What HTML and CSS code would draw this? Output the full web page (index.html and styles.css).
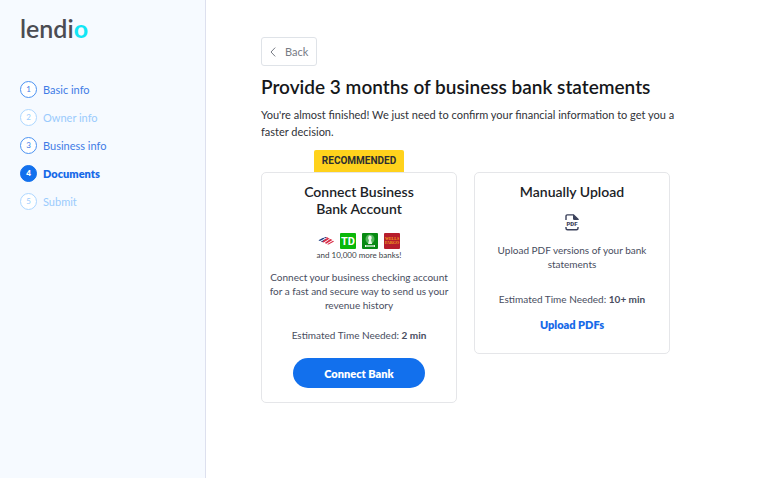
FILE: index.html
```html
<!DOCTYPE html>
<html lang="en">
<head>
<meta charset="utf-8">
<meta name="viewport" content="width=device-width, initial-scale=1">
<title>Lendio - Documents</title>
<link rel="stylesheet" href="styles.css">
</head>
<body>
<div class="app">
  <aside class="sidebar">
    <div class="logo">lendi<span class="logo-o">o</span></div>
    <nav aria-label="Application steps">
      <ol class="steps">
        <li class="step"><span class="step-number">1</span><a href="#basic">Basic info</a></li>
        <li class="step step-muted"><span class="step-number">2</span><a href="#owner">Owner info</a></li>
        <li class="step"><span class="step-number">3</span><a href="#business">Business info</a></li>
        <li class="step step-current" aria-current="step"><span class="step-number">4</span><a href="#documents">Documents</a></li>
        <li class="step step-muted"><span class="step-number">5</span><a href="#submit">Submit</a></li>
      </ol>
    </nav>
  </aside>
  <main class="main">
    <button class="back" type="button">
      <svg width="6" height="10" viewBox="0 0 6 10" fill="none" stroke="currentColor" aria-hidden="true"><path d="M5.200.6 1 5l4.200 4.400"/></svg>
      Back
    </button>
    <h1>Provide 3 months of business bank statements</h1>
    <p class="intro">You're almost finished! We just need to confirm your financial information to get you a faster decision.</p>
    <div class="options">
      <section class="option">
        <span class="badge">RECOMMENDED</span>
        <div class="card">
          <h2>Connect Business<br>Bank Account</h2>
          <div class="banks">
            <svg width="16" height="16" viewBox="0 0 17 16" aria-hidden="true">
              <path fill="#1c3c83" d="M.5 7.300 5.500 4.600l1.600.8-5 2.500zM3 8.700 8 6l1.500.8-5 2.500zM6.300 4.400 8 3.700l1.500.7-1.700.8z"/>
              <path fill="#d92b45" d="M8.300 5.600c1.500-1 2.800-1 4.200-.2L6 9.600l-1.500-.7zM13 5.800c1 .3 1.800.8 2.300 1.200L8.800 11l-1.700-.8zM9.600 11.500l6.400-3.800 1 .7-5.700 3.400zM8 4c1-.5 2-.5 3 0l-1.500.6z"/>
            </svg>
            <svg width="16" height="16" viewBox="0 0 16 16" aria-hidden="true">
              <rect width="16" height="16" rx="1" fill="#0ab80a"/>
              <text class="td-text" x="8" y="12" text-anchor="middle">TD</text>
            </svg>
            <svg width="16" height="16" viewBox="0 0 16 16" aria-hidden="true">
              <rect width="16" height="16" rx="1" fill="#078a12"/>
              <circle cx="8" cy="6" r="4.500" fill="#55b85c"/>
              <path fill="#eaf8ea" d="M7 2.500 9.200 3l.6 2-.8 2 1.200 4H6l1-3.600L6 5zM3 12h10v2H3z"/>
              <path stroke="#078a12" stroke-width=".7" d="M4 13h8"/>
            </svg>
            <svg width="16" height="16" viewBox="0 0 16 16" aria-hidden="true">
              <rect width="16" height="16" rx="1" fill="#b71c2c"/>
              <text class="wf-text" x="8" y="7" text-anchor="middle">WELLS</text>
              <text class="wf-text" x="8" y="11" text-anchor="middle">FARGO</text>
            </svg>
          </div>
          <p class="caption">and 10,000 more banks!</p>
          <p class="description">Connect your business checking account for a fast and secure way to send us your revenue history</p>
          <p class="estimate">Estimated Time Needed: <strong>2 min</strong></p>
          <button class="connect" type="button">Connect Bank</button>
        </div>
      </section>
      <section class="option">
        <div class="card card-upload">
          <h2>Manually Upload</h2>
          <svg class="pdf" width="14" height="17" viewBox="0 0 14 17" fill="none" aria-hidden="true">
            <path stroke="#3b415b" stroke-width="1.400" d="M1 6V2.200Q1 .9 2.300.9H8.500L13 5.200V6M1 13v1.300q0 1.500 1.500 1.500h9q1.500 0 1.500-1.500V13"/>
            <path fill="#3b415b" d="M8 .5 13.500 6H9.300Q8 6 8 4.700z"/>
            <text class="pdf-text" x="7" y="12" text-anchor="middle">PDF</text>
          </svg>
          <p class="description">Upload PDF versions of your bank statements</p>
          <p class="estimate">Estimated Time Needed: <strong>10+ min</strong></p>
          <a class="upload" href="#upload">Upload PDFs</a>
        </div>
      </section>
    </div>
  </main>
</div>
</body>
</html>
```
FILE: styles.css
```css
* {
  box-sizing: border-box;
}

body {
  margin: 0;
  background: #fff;
  color: #484d60;
  font-family: Lato, "Liberation Sans", sans-serif;
  font-size: 10px;
  font-weight: 400;
}

h1, h2, p, ol {
  margin: 0;
  padding: 0;
}

a {
  color: inherit;
  text-decoration: none;
}

.app {
  display: flex;
  min-height: 100vh;
}

.sidebar {
  flex: 0 0 206px;
  padding: 12px 20px;
  border-right: 1px solid #dde0ee;
  background: #f6faff;
}

.logo {
  color: #4b4c52;
  font-size: 25px;
  font-weight: 600;
  line-height: 32px;
}

.logo-o {
  color: #12e6f5;
  font-weight: 700;
}

.steps {
  display: flex;
  flex-direction: column;
  gap: 11px;
  margin-top: 37px;
  list-style: none;
}

.step {
  display: flex;
  align-items: center;
  gap: 6px;
  color: #3f7ce6;
  font-size: 11px;
  line-height: 17px;
}

.step-number {
  width: 17px;
  height: 17px;
  border: 1px solid #4c93f2;
  border-radius: 50%;
  background: #fff;
  font-size: 8px;
  line-height: 15px;
  text-align: center;
}

.step-muted {
  color: #9acbfd;
}

.step-muted .step-number {
  border-color: #add7ff;
}

.step-current {
  color: #1769e8;
  font-weight: 800;
}

.step-current .step-number {
  border-color: #1270ed;
  background: #1270ed;
  color: #fff;
}

.main {
  flex: 1;
  padding: 37px 55px;
}

.back {
  display: flex;
  align-items: center;
  gap: 9px;
  height: 29px;
  padding: 0 8px;
  border: 1px solid #dfe3e8;
  border-radius: 3px;
  background: #fff;
  color: #777b84;
  font: inherit;
  font-size: 11px;
}

h1 {
  margin-top: 9px;
  color: #15171a;
  font-size: 19px;
  font-weight: 600;
  line-height: 24px;
}

.intro {
  max-width: 420px;
  margin-top: 7px;
  color: #303238;
  font-size: 11px;
  line-height: 17px;
}

.options {
  display: grid;
  grid-template-columns: 1fr 1fr;
  align-items: start;
  gap: 17px;
  max-width: 409px;
  margin-top: 32px;
}

.option {
  position: relative;
}

.badge {
  position: absolute;
  bottom: 100%;
  left: 50%;
  width: 90px;
  border-radius: 2px 2px 0 0;
  background: #ffd21c;
  color: #2c2e31;
  font-family: Roboto, sans-serif;
  font-size: 10px;
  font-weight: 700;
  line-height: 22px;
  text-align: center;
  transform: translateX(-50%);
}

.card {
  display: flex;
  flex-direction: column;
  align-items: center;
  padding: 10px 4px 14px;
  border: 1px solid #e5e6e9;
  border-radius: 5px;
  text-align: center;
}

.card-upload {
  padding: 10px 20px 21px;
}

h2 {
  color: #202226;
  font-size: 14px;
  font-weight: 600;
  line-height: 17px;
}

.banks {
  display: flex;
  gap: 6px;
  margin-top: 16px;
}

.caption {
  color: #3c3f48;
  font-size: 8px;
  line-height: 12px;
}

.description {
  margin-top: 9px;
  line-height: 14px;
}

.estimate {
  margin-top: 16px;
  line-height: 14px;
}

.connect {
  width: 132px;
  height: 30px;
  margin-top: 16px;
  border: 0;
  border-radius: 15px;
  background: #1270ed;
  color: #fff;
  font: inherit;
  font-size: 11px;
  font-weight: 800;
}

.pdf {
  margin-top: 14px;
}

.card-upload .description {
  margin-top: 12px;
}

.card-upload .estimate {
  margin-top: 21px;
}

.upload {
  margin-top: 12px;
  color: #1769e8;
  font-size: 11px;
  font-weight: 800;
  line-height: 14px;
}

.td-text {
  fill: #fff;
  font-family: Roboto, sans-serif;
  font-size: 11px;
  font-weight: 700;
}

.wf-text {
  fill: #f3a51f;
  font-family: "Liberation Serif", serif;
  font-size: 4px;
  font-weight: 700;
}

.pdf-text {
  fill: #3b415b;
  font-family: Roboto, sans-serif;
  font-size: 6px;
  font-weight: 900;
}
```
